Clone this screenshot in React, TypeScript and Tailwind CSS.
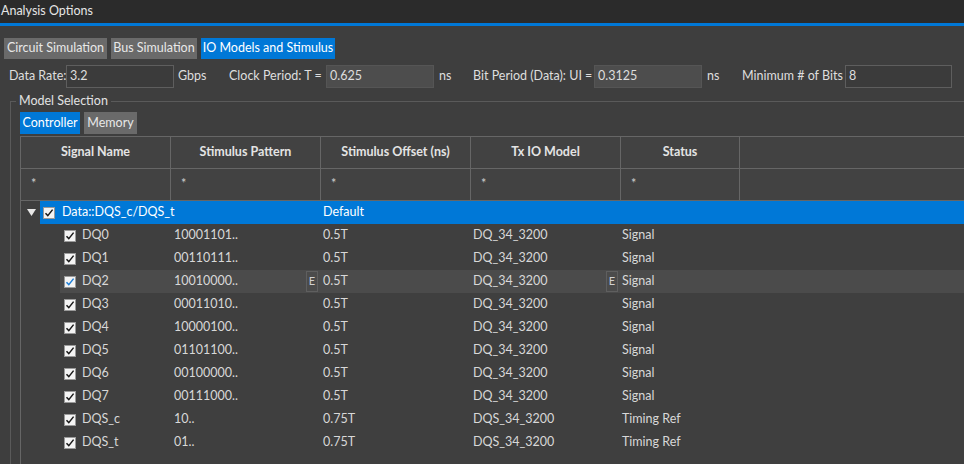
import React from 'react';

type Row = {
  name: string;
  pattern: string;
  offset: string;
  model: string;
  status: string;
  hover?: boolean;
};

const rows: Row[] = [
  { name: 'DQ0', pattern: '10001101..', offset: '0.5T', model: 'DQ_34_3200', status: 'Signal' },
  { name: 'DQ1', pattern: '00110111..', offset: '0.5T', model: 'DQ_34_3200', status: 'Signal' },
  { name: 'DQ2', pattern: '10010000..', offset: '0.5T', model: 'DQ_34_3200', status: 'Signal', hover: true },
  { name: 'DQ3', pattern: '00011010..', offset: '0.5T', model: 'DQ_34_3200', status: 'Signal' },
  { name: 'DQ4', pattern: '10000100..', offset: '0.5T', model: 'DQ_34_3200', status: 'Signal' },
  { name: 'DQ5', pattern: '01101100..', offset: '0.5T', model: 'DQ_34_3200', status: 'Signal' },
  { name: 'DQ6', pattern: '00100000..', offset: '0.5T', model: 'DQ_34_3200', status: 'Signal' },
  { name: 'DQ7', pattern: '00111000..', offset: '0.5T', model: 'DQ_34_3200', status: 'Signal' },
  { name: 'DQS_c', pattern: '10..', offset: '0.75T', model: 'DQS_34_3200', status: 'Timing Ref' },
  { name: 'DQS_t', pattern: '01..', offset: '0.75T', model: 'DQS_34_3200', status: 'Timing Ref' },
];

const headers = ['Signal Name', 'Stimulus Pattern', 'Stimulus Offset (ns)', 'Tx IO Model', 'Status'];

function CheckBox({ blue }: { blue?: boolean }) {
  return (
    <svg width="12" height="12" viewBox="0 0 12 12" className="shrink-0">
      <rect x="0.5" y="0.5" width="11" height="11" fill="#f4f4f4" stroke="#9a9a9a" />
      <path d="M2.5 6.2 L4.8 8.6 L9.6 2.6" fill="none" stroke={blue ? '#1e7fd8' : '#1a1a1a'} strokeWidth="1.5" />
    </svg>
  );
}

function EBadge() {
  return (
    <span className="flex h-[21px] w-[12px] items-center justify-center border border-[#5f5f5f] text-[11px] text-[#d0d0d0]">
      E
    </span>
  );
}

function Field({ value, disabled, width = 'w-[108px]' }: { value: string; disabled?: boolean; width?: string }) {
  return (
    <div
      className={`${width} flex h-[23px] shrink-0 items-center border px-[3px] ${
        disabled ? 'border-[#555] bg-[#4d4d4d]' : 'border-[#5e5e5e] bg-[#3b3b3b]'
      }`}>
      {value}
    </div>
  );
}

export default function App() {
  return (
    <div
      className="h-[464px] w-[964px] overflow-hidden whitespace-nowrap bg-[#3e3e3e] text-[12.5px] text-[#dedede]"
      style={{ fontFamily: 'Lato, "Noto Sans", sans-serif' }}>
      <div className="flex h-[23px] items-center bg-[#2b2b2b] pl-[1px] text-[#e6e6e6]">Analysis Options</div>
      <div className="h-[3px] bg-[#0078d7]" />

      <div className="mt-[12px] flex gap-[4px] pl-[4px]">
        <div className="flex h-[21px] w-[103px] items-center justify-center bg-[#6a6a6a] text-[#e8e8e8]">Circuit Simulation</div>
        <div className="flex h-[21px] w-[86px] items-center justify-center bg-[#6a6a6a] text-[#e8e8e8]">Bus Simulation</div>
        <div className="flex h-[21px] w-[134px] items-center justify-center bg-[#0078d7] text-white">IO Models and Stimulus</div>
      </div>

      <div className="mt-[6px] flex h-[23px] items-center pl-[9px]">
        <span className="w-[57px] shrink-0">Data Rate:</span>
        <Field value="3.2" />
        <span className="w-[55px] shrink-0 pl-[4px]">Gbps</span>
        <span className="w-[97px] shrink-0">Clock Period: T =</span>
        <Field value="0.625" disabled />
        <span className="w-[39px] shrink-0 pl-[5px]">ns</span>
        <span className="w-[121px] shrink-0">Bit Period (Data): UI =</span>
        <Field value="0.3125" disabled />
        <span className="w-[40px] shrink-0 pl-[5px]">ns</span>
        <span className="w-[103px] shrink-0">Minimum # of Bits</span>
        <Field value="8" width="w-[107px]" />
      </div>

      <div className="relative ml-[10px] mt-[13px] border-l border-t border-[#5a5a5a] pl-[9px] pt-[10px]">
        <span className="absolute left-[5px] top-[-9px] bg-[#3e3e3e] px-[3px] leading-[16px] text-[#e2e2e2]">
          Model Selection
        </span>

        <div className="flex gap-[4px]">
          <div className="flex h-[22px] w-[60px] items-center justify-center bg-[#0078d7] text-white">Controller</div>
          <div className="flex h-[22px] w-[53px] items-center justify-center bg-[#6a6a6a] text-[#e8e8e8]">Memory</div>
        </div>

        <div className="mt-[2px] h-[400px] border-l border-t border-[#666] bg-[#3f3f3f]">
          <div className="grid h-[32px] grid-cols-[150px_150px_150px_150px_119px_1fr] border-b border-[#666] bg-[#424242]">
            {headers.map((h) => (
              <div key={h} className="flex items-center justify-center border-r border-[#666] font-bold text-[#e4e4e4]">
                {h}
              </div>
            ))}
            <div />
          </div>
          <div className="grid h-[32px] grid-cols-[150px_150px_150px_150px_119px_1fr] border-b border-[#666] bg-[#424242]">
            {headers.map((h) => (
              <div key={h} className="flex items-center border-r border-[#666] pl-[10px] text-[#cfcfcf]">
                *
              </div>
            ))}
            <div />
          </div>

          <div className="flex h-[23px] items-center">
            <svg width="9" height="7" viewBox="0 0 9 7" className="ml-[6px] mr-[4px] shrink-0">
              <path d="M0 0 H9 L4.5 7 Z" fill="#e8e8e8" />
            </svg>
            <div className="flex h-full flex-1 items-center bg-[#0078d7] pl-[3px] text-white">
              <CheckBox />
              <span className="ml-[7px] w-[261px]">Data::DQS_c/DQS_t</span>
              <span>Default</span>
            </div>
          </div>

          {rows.map((r) => (
            <div key={r.name} className="flex h-[23px] items-center text-[#d8d8d8]">
              <div className={`ml-[39px] flex h-full flex-1 items-center ${r.hover ? 'bg-[#4b4b4b]' : ''}`}>
                <div className="flex w-[114px] items-center pl-[4px]">
                  <CheckBox blue={r.hover} />
                  <span className="ml-[6px]">{r.name}</span>
                </div>
                <div className="flex w-[149px] items-center justify-between pr-[5px]">
                  <span>{r.pattern}</span>
                  {r.hover && <EBadge />}
                </div>
                <div className="w-[150px]">{r.offset}</div>
                <div className="flex w-[149px] items-center justify-between pr-[4px]">
                  <span>{r.model}</span>
                  {r.hover && <EBadge />}
                </div>
                <div>{r.status}</div>
              </div>
            </div>
          ))}
        </div>
      </div>
    </div>
  );
}
